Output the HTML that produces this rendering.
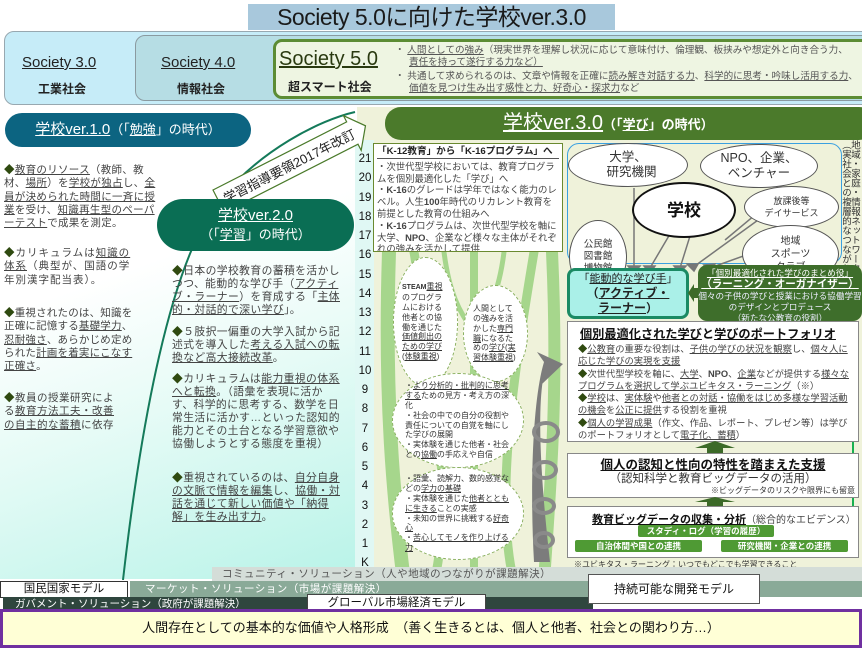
<!DOCTYPE html>
<html><head><meta charset="utf-8"><style>
*{margin:0;padding:0;box-sizing:border-box}
body{width:862px;height:648px;overflow:hidden;background:#fff;font-family:"Liberation Sans","Noto Sans CJK JP",sans-serif;color:#333;position:relative}
.a{position:absolute}
u{text-decoration:underline;text-underline-offset:1px}
.t{font-size:10.5px;line-height:13.3px;color:#444}
.d{color:#2f4a10}
.ell{position:absolute;border:1px solid #555;border-radius:50%;background:#fff;text-align:center;font-size:11px;line-height:13px;color:#333;display:flex;align-items:center;justify-content:center}
.box{position:absolute;border:1px solid #888;background:#fff}
.lbl{position:absolute;background:#4f9a34;color:#fff;font-size:8.5px;font-weight:bold;text-align:center;line-height:12px;border-radius:2px}
.tr{font-size:8px!important;line-height:9.8px!important}
</style></head><body>
<!-- title -->
<div class="a" style="left:248px;top:4px;width:367px;height:26px;background:#a8c8dc"></div>
<div class="a" style="left:248px;top:3px;width:367px;text-align:center;font-size:23px;line-height:28px;color:#1a1a1a;letter-spacing:-0.5px">Society 5.0に向けた学校ver.3.0</div>
<!-- top band -->
<div class="a" style="left:4px;top:31px;width:870px;height:74px;background:#c6ecf8;border:1px solid #98a8b0;border-radius:10px"></div>
<div class="a" style="left:135px;top:35px;width:740px;height:66px;background:#b6dde4;border:1px solid #8a9aa0;border-radius:10px"></div>
<div class="a" style="left:273px;top:39px;width:600px;height:60px;background:#eef5e2;border:3px solid #5c8c34;border-radius:9px"></div>
<div class="a" style="left:22px;top:54px;font-size:15px;color:#222"><u>Society 3.0</u></div>
<div class="a" style="left:38px;top:80px;font-size:12px;font-weight:bold;color:#222">工業社会</div>
<div class="a" style="left:161px;top:54px;font-size:15px;color:#222"><u>Society 4.0</u></div>
<div class="a" style="left:177px;top:80px;font-size:12px;font-weight:bold;color:#222">情報社会</div>
<div class="a" style="left:279px;top:48px;font-size:20px;color:#2a3a10"><u>Society 5.0</u></div>
<div class="a" style="left:288px;top:78px;font-size:12px;font-weight:bold;color:#222">超スマート社会</div>
<div class="a" style="left:395px;top:45px;width:465px;font-size:9.6px;line-height:12.3px;color:#555">
<div>・&nbsp;<u>人間としての強み</u>（現実世界を理解し状況に応じて意味付け、倫理観、板挟みや想定外と向き合う力、</div>
<div style="padding-left:14px"><u>責任を持って遂行する力など）</u></div>
<div style="margin-top:1px">・&nbsp;共通して求められるのは、文章や情報を正確に<u>読み解き対話する力</u>、<u>科学的に思考・吟味し活用する力</u>、</div>
<div style="padding-left:14px"><u>価値を見つけ生み出す感性と力、好奇心・探求力</u>など</div>
</div>
<!-- left bg -->
<div class="a" style="left:0;top:105px;width:357px;height:474px;background:linear-gradient(160deg,#fff 35%,#e6fbf6 60%,#b8f3e8 100%)"></div>
<div class="a" style="left:357px;top:107px;width:505px;height:472px;background:#eff2da"></div>
<div class="a" style="left:355px;top:140px;width:19px;height:440px;background:#e0f8f4"></div>
<!-- ver1 -->
<div class="a" style="left:5px;top:113px;width:246px;height:34px;background:#0c6481;border-radius:17px;color:#fff;font-size:15px;line-height:34px;text-align:center"><u>学校ver.1.0</u><span style="font-size:13px">（「<u>勉強</u>」の時代）</span></div>
<!-- left text -->
<div class="a t" style="left:4px;top:164px;width:152px;letter-spacing:0.3px"><span class="d">◆</span><u>教育のリソース</u>（教師、教材、<u>場所</u>）を<u>学校が独占</u>し、<u>全員が決められた時間に一斉に授業</u>を受け、<u>知識再生型のペーパーテスト</u>で成果を測定。</div>
<div class="a t" style="left:4px;top:247px;width:128px;letter-spacing:1px"><span class="d">◆</span>カリキュラムは<u>知識の体系</u>（典型が、国語の学年別漢字配当表）。</div>
<div class="a t" style="left:4px;top:307px;width:132px;letter-spacing:0.2px"><span class="d">◆</span>重視されたのは、知識を正確に記憶する<u>基礎学力</u>、<u>忍耐強さ</u>、あらかじめ定められた<u>計画を着実にこなす正確さ</u>。</div>
<div class="a t" style="left:4px;top:392px;width:112px;letter-spacing:0.5px"><span class="d">◆</span>教員の授業研究による<u>教育方法工夫・改善の自主的な蓄積</u>に依存</div>
<!-- curve + banner -->
<svg class="a" style="left:0;top:100px" width="380" height="480">
<path d="M123 480 C140 330 170 160 220 100 C260 50 320 20 355 12" stroke="#147a5a" stroke-width="2" fill="none"/>
<g transform="translate(213,90) rotate(-27)">
<path d="M0 0 L150 0 L150 -7 L165 12 L150 32 L150 25 L0 25 Z" fill="#fff" stroke="#4a7a2a" stroke-width="1.2"/>
<text x="6" y="18" font-size="13" fill="#222" font-family="Liberation Sans,Noto Sans CJK JP,sans-serif">学習指導要領2017年改訂</text>
</g>
</svg>
<!-- ver2 -->
<div class="a" style="left:157px;top:199px;width:197px;height:52px;background:#0a6e54;border-radius:26px;color:#fff;text-align:center;font-size:15px;line-height:19px;padding-top:7px"><u>学校ver.2.0</u><br><span style="font-size:13px">（「<u>学習</u>」の時代）</span></div>
<div class="a t" style="left:172px;top:265px;width:170px;font-size:10.8px;letter-spacing:0.4px;line-height:13px"><span class="d">◆</span>日本の学校教育の蓄積を活かしつつ、能動的な学び手（<u>アクティブ・ラーナー</u>）を育成する「<u>主体的・対話的で深い学び</u>」。</div>
<div class="a t" style="left:172px;top:326px;width:170px;font-size:10.8px;letter-spacing:0.4px;line-height:13px"><span class="d">◆</span>５肢択一偏重の大学入試から記述式を導入した<u>考える入試への転換など高大接続改革</u>。</div>
<div class="a t" style="left:172px;top:373px;width:170px;font-size:10.8px;letter-spacing:0.4px;line-height:13px"><span class="d">◆</span>カリキュラムは<u>能力重視の体系へと転換</u>。（語彙を表現に活かす、科学的に思考する、数学を日常生活に活かす…といった認知的能力とその土台となる学習意欲や協働しようとする態度を重視）</div>
<div class="a t" style="left:172px;top:472px;width:170px;font-size:10.8px;letter-spacing:0.4px;line-height:13px"><span class="d">◆</span>重視されているのは、<u>自分自身の文脈で情報を編集</u>し、<u>協働・対話を通じて新しい価値や「納得解」を生み出す力</u>。</div>
<!-- numbers -->
<div class="a" style="left:356px;top:150px;width:18px;font-size:11.5px;line-height:19.25px;color:#111;text-align:center">21<br>20<br>19<br>18<br>17<br>16<br>15<br>14<br>13<br>12<br>11<br>10<br>9<br>8<br>7<br>6<br>5<br>4<br>3<br>2<br>1<br>K</div>
<!-- tree area -->
<svg class="a" style="left:374px;top:252px" width="192" height="327">
<g fill="none" stroke="#a6d68c" stroke-linecap="round">
<path d="M30 330 C20 250 10 150 15 0" stroke-width="14"/>
<path d="M170 330 C175 250 185 150 178 0" stroke-width="12"/>
<path d="M60 330 C80 250 60 120 40 0" stroke-width="9"/>
<path d="M140 330 C120 250 140 120 160 0" stroke-width="9"/>
<path d="M100 330 L100 0" stroke-width="8"/>
<path d="M70 0 C75 40 85 60 100 80" stroke-width="5"/>
<path d="M130 0 C125 40 115 60 100 80" stroke-width="5"/>
</g>
<path d="M160 310 C156 240 158 150 170 110 L163 100 L189 112 L168 132 L170 122 C162 160 168 240 176 310 Z" fill="#7c7c7c"/>
<g fill="none" stroke="#8a8a8a" stroke-width="4"><ellipse cx="172" cy="180" rx="12" ry="9"/><ellipse cx="171" cy="218" rx="11" ry="8"/><ellipse cx="170" cy="254" rx="10" ry="7"/><ellipse cx="170" cy="288" rx="9" ry="7"/></g>
</svg>
<div class="ell tr" style="left:393px;top:257px;width:65px;height:130px;border:1px dashed #8ab060;padding:4px 8px;text-align:left"><div><b style="font-size:7px">STEAM</b><u>重視</u>のプログラムにおける他者との協働を通じた<u>価値創出のための学び</u>(<u>体験重視</u>)</div></div>
<div class="ell tr" style="left:463px;top:285px;width:65px;height:97px;border:1px dashed #8ab060;padding:4px 9px;text-align:left"><div>人間としての強みを活かした<u>専門職</u>になるための<u>学び</u>(<u>実習体験重視</u>)</div></div>
<div class="ell tr" style="left:392px;top:373px;width:132px;height:95px;border:1px dashed #8ab060;padding:4px 12px;text-align:left"><div>・<u>より分析的・批判的に思考する</u>ための見方・考え方の深化<br>・社会の中での自分の役割や責任についての自覚を軸にした学びの展開<br>・実体験を通じた他者・社会との<u>協働</u>の手応えや自信</div></div>
<div class="ell tr" style="left:392px;top:467px;width:132px;height:93px;border:1px dashed #8ab060;padding:4px 12px;text-align:left"><div>・語彙、読解力、数的感覚などの<u>学力の基礎</u><br>・実体験を通じた<u>他者とともに生きる</u>ことの実感<br>・未知の世界に挑戦する<u>好奇心</u><br>・<u>苦心してモノを作り上げる力</u></div></div>
<!-- ver3 pill -->
<div class="a" style="left:385px;top:107px;width:490px;height:33px;background:#4b7a2b;border-radius:16px;color:#fff;line-height:33px;padding-left:118px;font-size:20px"><u>学校ver.3.0</u><span style="font-size:13px;font-weight:bold">（「<u>学び</u>」の時代）</span></div>
<!-- K-12 box -->
<div class="a" style="left:373px;top:143px;width:190px;height:109px;background:#fff;border:1px solid #6a8a30;padding:2px 3px;font-size:9.4px;line-height:11.8px;color:#444;overflow:hidden">
<div style="font-weight:bold;color:#222;border-bottom:1px solid #555;margin-bottom:2px;font-size:9.6px;white-space:nowrap">「K-12教育」から「K-16プログラム」へ</div>
<div>・次世代型学校においては、教育プログラムを個別最適化した「学び」へ</div>
<div>・<b>K-16</b>のグレードは学年ではなく能力のレベル。人生<b>100</b>年時代のリカレント教育を前提とした教育の仕組みへ</div>
<div>・<b>K-16</b>プログラムは、次世代型学校を軸に大学、<b>NPO</b>、企業など様々な主体がそれぞれの強みを活かして提供</div>
</div>
<!-- network -->
<div class="a" style="left:567px;top:143px;width:275px;height:121px;border:1px solid #3aa0e0;border-radius:12px"></div>
<svg class="a" style="left:560px;top:140px" width="302" height="140">
<g stroke="#777" stroke-width="1.5" fill="#777">
<path d="M74 48 L74 128" fill="none"/><path d="M110 94 L90 128" fill="none"/><path d="M130 96 L120 128" fill="none"/>
<path d="M205 75 L132 128" fill="none"/><path d="M200 110 L150 128" fill="none"/><path d="M225 50 L165 100" fill="none"/>
<path d="M68 126 L74 133 L80 126Z"/><path d="M84 126 L90 133 L95 126Z"/><path d="M114 126 L120 133 L126 126Z"/><path d="M127 124 L134 131 L138 124Z"/><path d="M144 125 L151 131 L155 124Z"/>
</g>
</svg>
<div class="ell" style="left:568px;top:143px;width:120px;height:44px;font-size:12.5px;line-height:15px"><div>大学、<br>&nbsp;&nbsp;研究機関</div></div>
<div class="ell" style="left:700px;top:144px;width:118px;height:44px;font-size:12.5px;line-height:15px"><div>NPO、企業、<br>ベンチャー</div></div>
<div class="ell" style="left:632px;top:182px;width:104px;height:56px;border:2px solid #111;font-size:17px;font-weight:bold;color:#111">学校</div>
<div class="ell" style="left:744px;top:186px;width:95px;height:42px;font-size:9px;line-height:12px"><div>放課後等<br>デイサービス</div></div>
<div class="ell" style="left:742px;top:225px;width:97px;height:58px;font-size:10px;line-height:13px"><div>地域<br>スポーツ<br>クラブ</div></div>
<div class="ell" style="left:569px;top:220px;width:58px;height:74px;font-size:9.5px;line-height:12px"><div>公民館<br>図書館<br>博物館</div></div>
<!-- vertical text -->
<div class="a" style="left:849px;top:140px;writing-mode:vertical-rl;font-size:9.5px;line-height:11px;color:#333;height:140px">地域・家庭・情報ネットワーク</div>
<div class="a" style="left:840px;top:140px;writing-mode:vertical-rl;font-size:9.5px;line-height:11px;color:#333;height:140px">（実社会との複層的なつながり）</div>
<!-- active learner -->
<div class="a" style="left:567px;top:268px;width:122px;height:51px;background:#aaf0e8;border:3px solid #1b8a64;border-radius:8px;text-align:center;font-size:11px;line-height:14px;padding-top:1px;color:#222">「<u>能動的な学び手</u>」<br><b style="font-size:12px">（<u>アクティブ・</u><br><u>ラーナー</u>）</b></div>
<svg class="a" style="left:688px;top:284px" width="12" height="18"><path d="M12 4 L6 4 L6 0 L0 9 L6 18 L6 14 L12 14Z" fill="#3c6a28"/></svg>
<div class="a" style="left:698px;top:265px;width:164px;height:56px;background:#3e6e2b;border-radius:9px;color:#eef;text-align:center;font-size:8.6px;line-height:11.3px;padding-top:3px">
<div style="color:#fff"><u>「個別最適化された学びのまとめ役」</u></div>
<div style="font-weight:bold;font-size:10.5px;color:#fff"><u>（ラーニング・オーガナイザー）</u></div>
<div>個々の子供の学びと授業における協働学習のデザインとプロデュース</div>
<div>（新たな<u>公教育の役割</u>）</div></div>
<!-- green line -->
<div class="a" style="left:852px;top:322px;width:2px;height:208px;background:#18b050"></div>
<!-- portfolio -->
<div class="box" style="left:567px;top:321px;width:292px;height:121px;padding:3px 8px 0 10px;font-size:9.3px;line-height:12.3px;color:#444">
<div style="font-weight:bold;font-size:12.2px;line-height:18px;color:#111;margin-left:2px;white-space:nowrap"><u>個別最適化された学び</u>と<u>学びのポートフォリオ</u></div>
<div><span class="d">◆</span><u>公教育</u>の重要な役割は、<u>子供の学びの状況を観察</u>し、<u>個々人に応じた学びの実現を支援</u></div>
<div><span class="d">◆</span>次世代型学校を軸に、<u>大学</u>、<b>NPO</b>、<u>企業</u>などが提供する<u>様々なプログラムを選択して学ぶユビキタス・ラーニング</u>（※）</div>
<div><span class="d">◆</span><u>学校</u>は、<u>実体験</u>や<u>他者との対話・協働をはじめ多様な学習活動の機会</u>を<u>公正に提供</u>する役割を重視</div>
<div><span class="d">◆</span><u>個人の学習成果</u>（作文、作品、レポート、プレゼン等）は学びのポートフォリオとして<u>電子化、蓄積</u>）</div>
</div>
<svg class="a" style="left:695px;top:441px" width="40" height="13"><path d="M20 0 L40 7 L28 7 L28 13 L12 13 L12 7 L0 7Z" fill="#3c6a28"/></svg>
<div class="box" style="left:567px;top:453px;width:292px;height:45px;text-align:center;color:#333">
<div style="font-weight:bold;font-size:12.5px;line-height:16px;margin-top:3px;color:#111"><u>個人の認知と性向の特性を踏まえた支援</u></div>
<div style="font-size:11.5px;line-height:13px">（認知科学と教育ビッグデータの活用）</div>
<div style="font-size:8px;line-height:10px;text-align:right;padding-right:3px">※ビッグデータのリスクや限界にも留意</div></div>
<svg class="a" style="left:695px;top:497px" width="40" height="10"><path d="M20 0 L40 5 L28 5 L28 10 L12 10 L12 5 L0 5Z" fill="#3c6a28"/></svg>
<div class="box" style="left:567px;top:506px;width:292px;height:52px"></div>
<div class="a" style="left:592px;top:511px;font-size:11px;font-weight:bold;color:#111"><u>教育ビッグデータの収集・分析</u><span style="font-weight:normal;font-size:10px;color:#444">（総合的なエビデンス）</span></div>
<div class="lbl" style="left:638px;top:525px;width:136px">スタディ・ログ（学習の履歴）</div>
<div class="lbl" style="left:575px;top:540px;width:127px">自治体間や国との連携</div>
<div class="lbl" style="left:721px;top:540px;width:127px">研究機関・企業との連携</div>
<div class="a" style="left:574px;top:559px;font-size:8px;color:#333">※ユビキタス・ラーニング：いつでもどこでも学習できること</div>
<!-- bottom bands -->
<div class="a" style="left:212px;top:567px;width:650px;height:14px;background:#d4ddd8;font-size:10.5px;line-height:14px;color:#555;padding-left:10px;letter-spacing:0.5px">コミュニティ・ソリューション（人や地域のつながりが課題解決）</div>
<div class="a" style="left:130px;top:581px;width:732px;height:16px;background:#8aaa98;font-size:10.5px;line-height:16px;color:#fff;padding-left:15px;letter-spacing:0.5px">マーケット・ソリューション（市場が課題解決）</div>
<div class="a" style="left:0;top:581px;width:128px;height:17px;background:#fff;border:1px solid #333;font-size:11.5px;line-height:15px;text-align:center;color:#111">国民国家モデル</div>
<div class="a" style="left:3px;top:597px;width:590px;height:14px;background:#2f463e;font-size:10.5px;line-height:14px;color:#fff;padding-left:12px">ガバメント・ソリューション（政府が課題解決）</div>
<div class="a" style="left:307px;top:594px;width:179px;height:18px;background:#fff;border:1px solid #444;font-size:11.5px;line-height:17px;text-align:center;color:#111">グローバル市場経済モデル</div>
<div class="a" style="left:588px;top:574px;width:172px;height:30px;background:#fff;border:1px solid #555;font-size:12px;line-height:28px;text-align:center;color:#111">持続可能な開発モデル</div>
<div class="a" style="left:0;top:609px;width:862px;height:39px;background:#ffffd6;border:3px solid #7030a0;font-size:13px;line-height:31px;text-align:center;color:#111">人間存在としての基本的な価値や人格形成　（善く生きるとは、個人と他者、社会との関わり方…）</div>
</body></html>
